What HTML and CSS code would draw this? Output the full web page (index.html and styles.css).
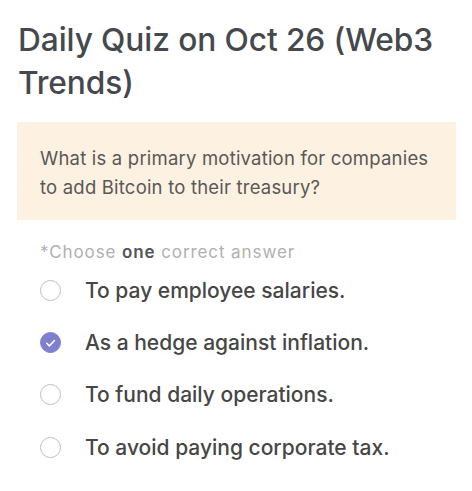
FILE: index.html
```html
<!DOCTYPE html>
<html>
<head>
<meta charset="utf-8">
<link rel="stylesheet" href="styles.css">
</head>
<body>
<div class="page">
  <h1 class="title">Daily Quiz on Oct 26 (Web3 Trends)</h1>
  <div class="question">What is a primary motivation for companies to add Bitcoin to their treasury?</div>
  <div class="hint">*Choose <b>one</b> correct answer</div>
  <ul class="options">
    <li class="option"><span class="radio"></span><span class="label">To pay employee salaries.</span></li>
    <li class="option"><span class="radio checked"><svg viewBox="0 0 20 20" width="20" height="20"><path d="M6 10.2l2.8 2.8L14.2 7.4" fill="none" stroke="#fff" stroke-width="1.6" stroke-linecap="round" stroke-linejoin="round"/></svg></span><span class="label">As a hedge against inflation.</span></li>
    <li class="option"><span class="radio"></span><span class="label">To fund daily operations.</span></li>
    <li class="option"><span class="radio"></span><span class="label">To avoid paying corporate tax.</span></li>
  </ul>
</div>
</body>
</html>
```
FILE: styles.css
```css
* { box-sizing: border-box; }
html, body { margin: 0; padding: 0; background: #fff; }
body { font-family: Inter, "Noto Sans", sans-serif; }
.page { padding: 18px 16px 0 17px; }
.title {
  margin: 0 0 0 1px;
  font-size: 31.7px;
  line-height: 43px;
  font-weight: 500;
  color: #45484d;
  letter-spacing: -0.1px;
}
.question {
  margin-top: 18px;
  background: #fdf1e1;
  padding: 22px 14px 18px 23px;
  font-size: 18.5px;
  line-height: 29px;
  color: #585858;
  letter-spacing: 0.2px;
}
.hint {
  margin: 22px 0 0 23px;
  font-size: 17px;
  line-height: 20px;
  color: #b0b0b0;
  letter-spacing: 0.9px;
}
.hint b { color: #555; font-weight: 600; }
.options { list-style: none; margin: 2px 0 0 0; padding: 0 0 0 23px; }
.option { display: flex; align-items: center; height: 52.4px; }
.radio {
  width: 21px; height: 21px; border-radius: 50%;
  border: 1.5px solid #bdbdbd;
  margin-left: 0; margin-right: 24px; flex: none;
  display: flex; align-items: center; justify-content: center;
}
.radio.checked { background: #7f7fd0; border-color: #7f7fd0; }
.radio svg { display: block; }
.label { font-size: 21px; color: #464646; font-weight: 500; letter-spacing: 0px; }
```
